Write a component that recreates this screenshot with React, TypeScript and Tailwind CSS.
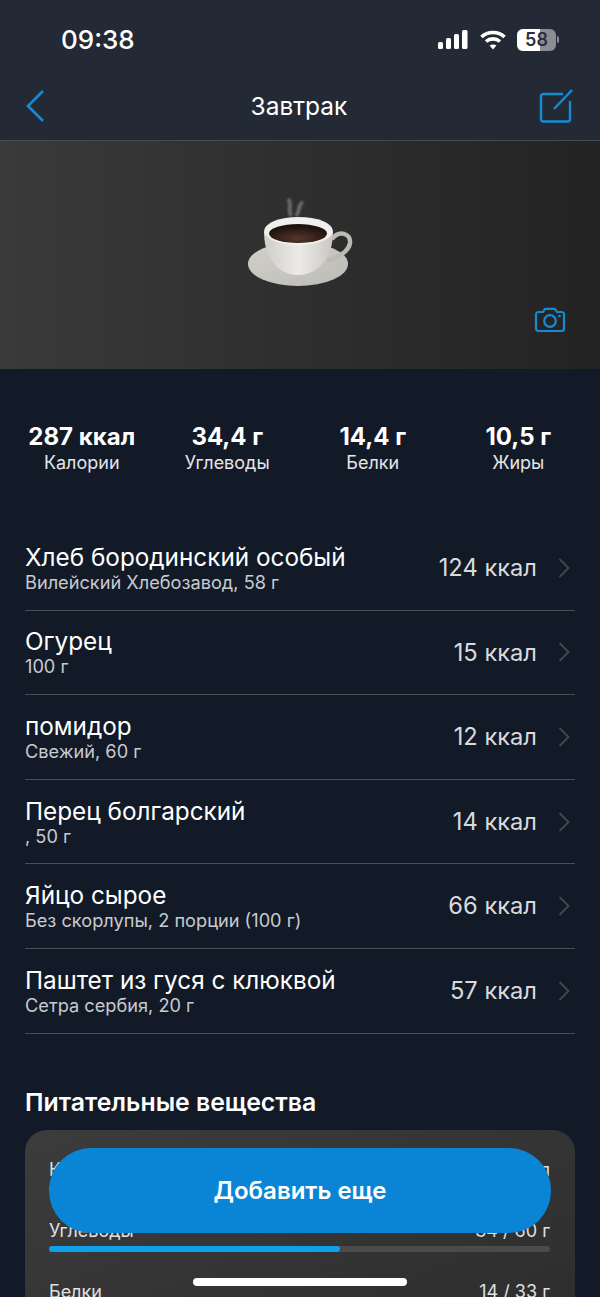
const stats = [
  { value: "287 ккал", label: "Калории" },
  { value: "34,4 г", label: "Углеводы" },
  { value: "14,4 г", label: "Белки" },
  { value: "10,5 г", label: "Жиры" },
];

const foods = [
  { name: "Хлеб бородинский особый", sub: "Вилейский Хлебозавод, 58 г", kcal: "124 ккал" },
  { name: "Огурец", sub: "100 г", kcal: "15 ккал" },
  { name: "помидор", sub: "Свежий, 60 г", kcal: "12 ккал" },
  { name: "Перец болгарский", sub: ", 50 г", kcal: "14 ккал" },
  { name: "Яйцо сырое", sub: "Без скорлупы, 2 порции (100 г)", kcal: "66 ккал" },
  { name: "Паштет из гуся с клюквой", sub: "Сетра сербия, 20 г", kcal: "57 ккал" },
];

const nutrients = [
  { name: "Калории", value: "287 / 500 ккал", pct: 57 },
  { name: "Углеводы", value: "34 / 60 г", pct: 58 },
  { name: "Белки", value: "14 / 33 г", pct: 42 },
];

function StatusIcons() {
  return (
    <div className="flex items-center">
      <svg width="30" height="19" viewBox="0 0 30 19" fill="#fff">
        <rect x="0" y="12" width="5" height="7" rx="1.5" />
        <rect x="8" y="8" width="5" height="11" rx="1.5" />
        <rect x="16" y="4" width="5" height="15" rx="1.5" />
        <rect x="24" y="0" width="5.5" height="19" rx="1.5" />
      </svg>
      <svg width="26" height="20" viewBox="0 0 26 20" fill="none" stroke="#fff" strokeWidth="3.6" className="ml-[12px]">
        <path d="M1.5 7 C7.5 1 18.5 1 24.5 7" />
        <path d="M6 11.5 C10 8 16 8 20 11.5" />
        <path d="M13 19.5 L9.6 15.6 C11.5 14.2 14.5 14.2 16.4 15.6 Z" fill="#fff" stroke="none" />
      </svg>
      <div className="ml-[11px] flex items-center gap-[1px]">
        <div className="relative flex h-[22px] w-[39px] items-center justify-center overflow-hidden rounded-[6px] bg-[#8b8d92]">
          <div className="absolute inset-y-0 left-0 w-[23px] bg-white" />
          <span className="relative text-[18px] font-semibold leading-none text-[#2a303b]">58</span>
        </div>
        <div className="h-[7px] w-[2px] rounded-r-full bg-[#8b8d92]" />
      </div>
    </div>
  );
}

function CoffeeCup() {
  return (
    <svg width="106" height="94" viewBox="0 0 106 94">
      <defs>
        <linearGradient id="saucer" x1="0" y1="0" x2="1" y2="1">
          <stop offset="0" stopColor="#d2d0ca" />
          <stop offset="1" stopColor="#bdbbb5" />
        </linearGradient>
        <linearGradient id="cup" x1="0" y1="0" x2="1" y2="0">
          <stop offset="0" stopColor="#cfcdc8" />
          <stop offset="0.5" stopColor="#ecebe7" />
          <stop offset="1" stopColor="#c9c7c2" />
        </linearGradient>
        <radialGradient id="coffee" cx="0.5" cy="0.75" r="0.6">
          <stop offset="0" stopColor="#553729" />
          <stop offset="1" stopColor="#1f1310" />
        </radialGradient>
      </defs>
      <path d="M41 4 C46 9 40 14 44 21 M56 7 C50 10 54 15 49 21" fill="none" stroke="#9a9a9a" strokeWidth="3.5" opacity="0.6" className="blur-[1px]" />
      <ellipse cx="51" cy="69" rx="50" ry="22" fill="url(#saucer)" />
      <path d="M85 44 C92 35 104 38 103 48 C102 56 92 62 80 66" fill="none" stroke="#bcbab5" strokeWidth="4.5" />
      <path d="M17 37 C17 62 30 80 51 80 C72 80 86 62 86 37 Z" fill="url(#cup)" />
      <ellipse cx="51.5" cy="36" rx="34.5" ry="14" fill="#f0efec" />
      <ellipse cx="51" cy="38.5" rx="29" ry="9.5" fill="url(#coffee)" />
    </svg>
  );
}

function CameraIcon() {
  return (
    <svg width="32" height="26" viewBox="0 0 32 26" fill="none" stroke="#168bd2" strokeWidth="2.2">
      <path d="M2 7.5 C2 6 3 5 4.5 5 H9 L11 1.8 H21 L23 5 H27.5 C29 5 30 6 30 7.5 V21.5 C30 23 29 24 27.5 24 H4.5 C3 24 2 23 2 21.5 Z" strokeLinejoin="round" />
      <circle cx="16" cy="14" r="5.8" />
      <circle cx="25.5" cy="9" r="1.3" fill="#168bd2" stroke="none" />
    </svg>
  );
}

export default function App() {
  return (
    <div className="relative h-[1297px] w-[600px] overflow-hidden bg-[#121a27] font-['Inter',sans-serif] text-white">
      {/* header */}
      <header className="h-[140px] bg-[#232a36]">
        <div className="flex h-[78px] items-center justify-between pl-[61px] pr-[41px] pt-[1px]">
          <span className="text-[26px] font-medium leading-none">09:38</span>
          <StatusIcons />
        </div>
        <div className="grid h-[56px] grid-cols-[1fr_auto_1fr] items-center pl-[25px] pr-[27px]">
          <svg width="20" height="34" viewBox="0 0 20 34" fill="none" stroke="#168bd2" strokeWidth="2.6">
            <path d="M18 2 L3 17 L18 32" />
          </svg>
          <span className="text-[24.5px] leading-none">Завтрак</span>
          <svg width="34" height="34" viewBox="0 0 34 34" fill="none" stroke="#168bd2" strokeWidth="2.4" className="justify-self-end">
            <path d="M24 5 H4.5 C2.8 5 2 5.8 2 7.5 V30 C2 31.7 2.8 32.5 4.5 32.5 H28.5 C30.2 32.5 31 31.7 31 30 V12" />
            <path d="M15 20 L33 1" />
          </svg>
        </div>
      </header>

      {/* hero */}
      <section className="flex h-[229px] flex-col items-center border-t border-[#454a54] bg-gradient-to-r from-[#3a3a3a] to-[#232323] pt-[54px]">
        <CoffeeCup />
        <div className="flex w-full justify-end pr-[34px] pt-[18px]">
          <CameraIcon />
        </div>
      </section>

      {/* totals */}
      <section className="grid grid-cols-4 px-[9px] pt-[54px]">
        {stats.map((s) => (
          <div key={s.label} className="flex flex-col items-center">
            <span className="text-[24px] font-bold leading-[28px]">{s.value}</span>
            <span className="text-[18px] leading-[24px] text-[#e4e5e8]">{s.label}</span>
          </div>
        ))}
      </section>

      {/* food list */}
      <section className="mx-[25px] mt-[51px]">
        {foods.map((f) => (
          <div key={f.name} className="flex h-[84.6px] items-center border-b border-[#4a4e58]">
            <div className="min-w-0 flex-1">
              <div className="text-[24.3px] leading-[28px]">{f.name}</div>
              <div className="text-[18.2px] leading-[22px] text-[#c8cad0]">{f.sub}</div>
            </div>
            <span className="text-[23.7px] leading-none text-[#d9dade]">{f.kcal}</span>
            <svg width="12" height="20" viewBox="0 0 12 20" fill="none" stroke="#444852" strokeWidth="1.8" className="ml-[21px] mr-[5px]">
              <path d="M1.5 1 L10.5 10 L1.5 19" />
            </svg>
          </div>
        ))}
      </section>

      {/* nutrients */}
      <section className="mx-[25px] mt-[52px]">
        <h2 className="text-[24.8px] font-semibold leading-[32px]">Питательные вещества</h2>
        <div className="mt-[12px] rounded-[22px] bg-gradient-to-br from-[#3c3c3c] to-[#2c2c2c] pb-[20px] pl-[24px] pr-[25px] pt-[28px]">
          {nutrients.map((n) => (
            <div key={n.name} className="mb-[28px]">
              <div className="flex justify-between text-[18px] leading-[24px] text-[#dfe0e3]">
                <span>{n.name}</span>
                <span>{n.value}</span>
              </div>
              <div className="mt-[3px] h-[6px] rounded-full bg-[#4b4b4b]">
                <div className="h-full rounded-full bg-[#0ea0e8]" style={{ width: `${n.pct}%` }} />
              </div>
            </div>
          ))}
        </div>
      </section>

      {/* floating button + home bar */}
      <button className="absolute left-[49px] top-[1148px] flex h-[85px] w-[502px] items-center justify-center rounded-[42px] bg-[#0a85d6] text-[24px] font-semibold text-white">
        Добавить еще
      </button>
      <div className="absolute left-[193px] top-[1278px] h-[8px] w-[214px] rounded-full bg-white" />
    </div>
  );
}
